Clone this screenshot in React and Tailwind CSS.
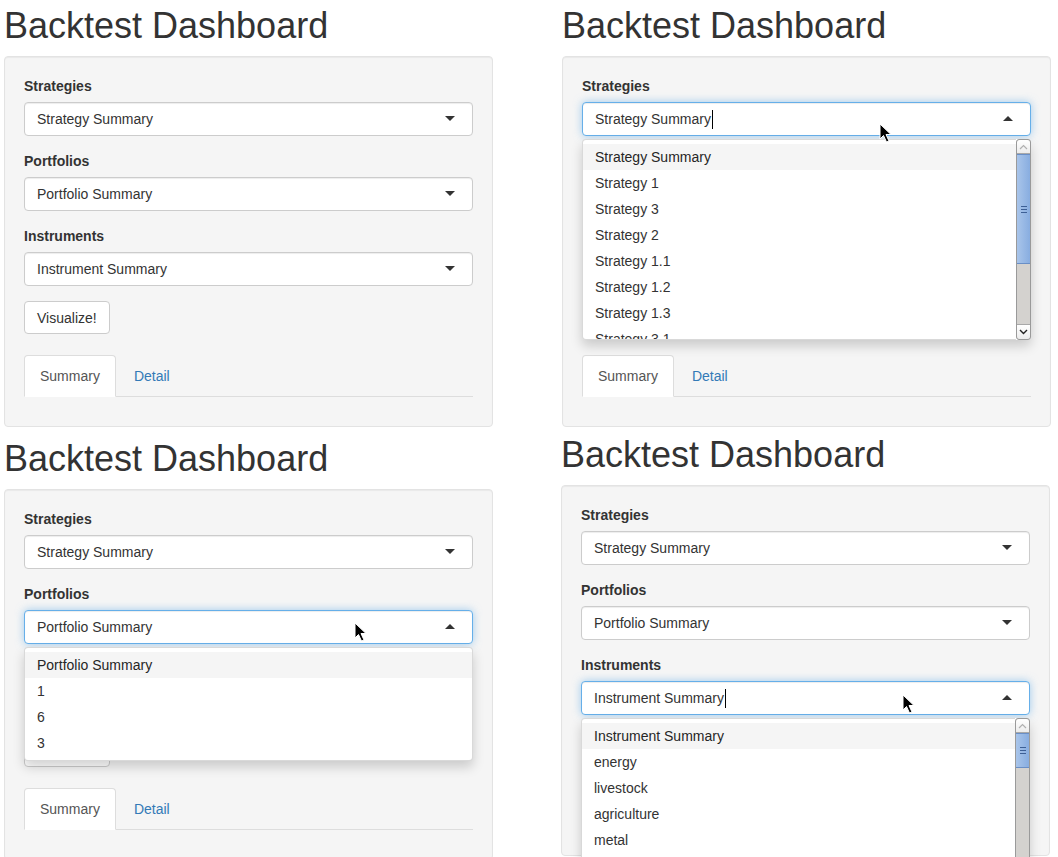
import React from "react";

const strategyItems = ["Strategy Summary", "Strategy 1", "Strategy 3", "Strategy 2", "Strategy 1.1", "Strategy 1.2", "Strategy 1.3", "Strategy 3.1", "Strategy 3.2", "Strategy 2.1"];
const portfolioItems = ["Portfolio Summary", "1", "6", "3"];
const instrumentItems = ["Instrument Summary", "energy", "livestock", "agriculture", "metal", "currency", "equity", "rates", "softs"];

// Small black mouse pointer drawn over the page
const Pointer = ({ x, y }) => (
    <svg className="absolute z-30" style={{ left: x, top: y }} width="14" height="21" viewBox="0 0 14 21">
        <path d="M1 1 L1 16 L4.5 12.5 L7.5 19 L10 18 L7 11.5 L12 11.5 Z" fill="#000" stroke="#fff" strokeWidth="1" strokeLinejoin="round" />
    </svg>
);

// Fake gtk-like scrollbar for the selectize dropdowns
const Scrollbar = ({ thumb }) => (
    <div className="w-[15px] h-full flex flex-col border border-[#9a9a9a] rounded-[3px] bg-[#d4d2cf] overflow-hidden">
        <div className="h-[14px] flex items-center justify-center bg-gradient-to-b from-white to-[#ececec] border-b border-[#a8a8a8] rounded-t-[3px]">
            <svg width="9" height="6" viewBox="0 0 9 6"><polyline points="1,5 4.5,1.5 8,5" fill="none" stroke="#b0b0b0" strokeWidth="1.2" /></svg>
        </div>
        <div className={`${thumb} flex flex-col items-center justify-center gap-[2px] bg-gradient-to-r from-[#a9c5ea] to-[#88ade0] border-y border-[#6a8fc6]`}>
            <div className="w-[6px] h-px bg-[#3d5f95]" />
            <div className="w-[6px] h-px bg-[#3d5f95]" />
            <div className="w-[6px] h-px bg-[#3d5f95]" />
        </div>
        <div className="flex-1" />
        <div className="h-[15px] flex items-center justify-center bg-gradient-to-b from-white to-[#ececec] border-t border-[#a8a8a8] rounded-b-[3px]">
            <svg width="9" height="6" viewBox="0 0 9 6"><polyline points="1,1 4.5,4.5 8,1" fill="none" stroke="#222" strokeWidth="1.4" /></svg>
        </div>
    </div>
);

const Dropdown = ({ items, thumb }) => {
    const list = items.map((item, i) => (
        <div key={item} className={`px-[12px] py-[3px] leading-[20px] whitespace-nowrap ${i === 0 ? "bg-[#f5f5f5] text-[#262626]" : "text-[#333]"}`}>
            {item}
        </div>
    ));

    if (!thumb) {
        return (
            <div className="absolute left-0 right-0 top-[63px] z-20 bg-white border border-[rgba(0,0,0,0.15)] rounded-[4px] shadow-[0_6px_12px_rgba(0,0,0,0.175)] py-[4px]">
                {list}
            </div>
        );
    }

    return (
        <div className="absolute left-0 right-0 top-[63px] z-20 h-[201px] flex bg-white rounded-[4px] shadow-[0_6px_12px_rgba(0,0,0,0.175)]">
            <div className="flex-1 overflow-hidden border-y border-l border-[rgba(0,0,0,0.15)] rounded-l-[4px] pt-[4px]">
                {list}
            </div>
            <Scrollbar thumb={thumb} />
        </div>
    );
};

const SelectField = ({ label, value, open, caret, items, thumb }) => (
    <div className="relative mb-[15px]">
        <label className="block font-bold leading-[20px] mb-[6px]">{label}</label>
        <div className={`h-[34px] flex items-center justify-between pl-[12px] pr-[17px] bg-white border rounded-[4px] ${open ? "border-[#66afe9] shadow-[inset_0_1px_1px_rgba(0,0,0,0.075),0_0_8px_rgba(102,175,233,0.6)]" : "border-[#ccc] shadow-[inset_0_1px_1px_rgba(0,0,0,0.075)]"}`}>
            <div className="flex items-center leading-[20px]">
                <span>{value}</span>
                {caret && <span className="w-px h-[19px] bg-black ml-[1px]" />}
            </div>
            {open ? (
                <span className="w-0 h-0 mb-[2px] border-x-[5px] border-x-transparent border-b-[5px] border-b-[#333]" />
            ) : (
                <span className="w-0 h-0 mb-[2px] border-x-[5px] border-x-transparent border-t-[5px] border-t-[#333]" />
            )}
        </div>
        {open && <Dropdown items={items} thumb={thumb} />}
    </div>
);

const Panel = ({ open, thumb, caret }) => (
    <div className="pl-[4px]">
        <h1 className="text-[36px] leading-[40px] h-[40px] mt-[6px] mb-[10px] text-[#333] whitespace-nowrap">Backtest Dashboard</h1>
        <div className="w-[489px] bg-[#f5f5f5] border border-[#e3e3e3] rounded-[4px] shadow-[inset_0_1px_1px_rgba(0,0,0,0.05)] px-[19px] pt-[19px] pb-[29px]">
            <SelectField label="Strategies" value="Strategy Summary" open={open === "strategies"} caret={caret && open === "strategies"} items={strategyItems} thumb={thumb} />
            <SelectField label="Portfolios" value="Portfolio Summary" open={open === "portfolios"} caret={caret && open === "portfolios"} items={portfolioItems} thumb={thumb} />
            <SelectField label="Instruments" value="Instrument Summary" open={open === "instruments"} caret={caret && open === "instruments"} items={instrumentItems} thumb={thumb} />
            <button className="block mt-[1px] h-[33px] px-[12px] bg-white border border-[#ccc] rounded-[4px] text-[#333] leading-[20px]">Visualize!</button>
            <div className="flex mt-[21px] border-b border-[#ddd]">
                <div className="-mb-px mr-[2px] px-[15px] py-[10px] leading-[20px] bg-white border border-[#ddd] border-b-transparent rounded-t-[4px] text-[#555]">Summary</div>
                <div className="-mb-px px-[15px] py-[10px] leading-[20px] border border-transparent text-[#337ab7]">Detail</div>
            </div>
        </div>
    </div>
);

export default function App() {
    return (
        <div className="relative w-[1058px] h-[857px] overflow-hidden bg-white text-[14px] text-[#333] font-['Liberation_Sans',Arial,sans-serif]">
            <div className="grid grid-cols-[558px_500px] grid-rows-[433px_auto]">
                <Panel />
                <Panel open="strategies" thumb="h-[110px]" caret />
                <Panel open="portfolios" />
                <div className="-mt-[4px] -ml-[1px]">
                    <Panel open="instruments" thumb="h-[35px]" caret />
                </div>
            </div>
            <Pointer x={879} y={123} />
            <Pointer x={354} y={622} />
            <Pointer x={902} y={694} />
        </div>
    );
}
